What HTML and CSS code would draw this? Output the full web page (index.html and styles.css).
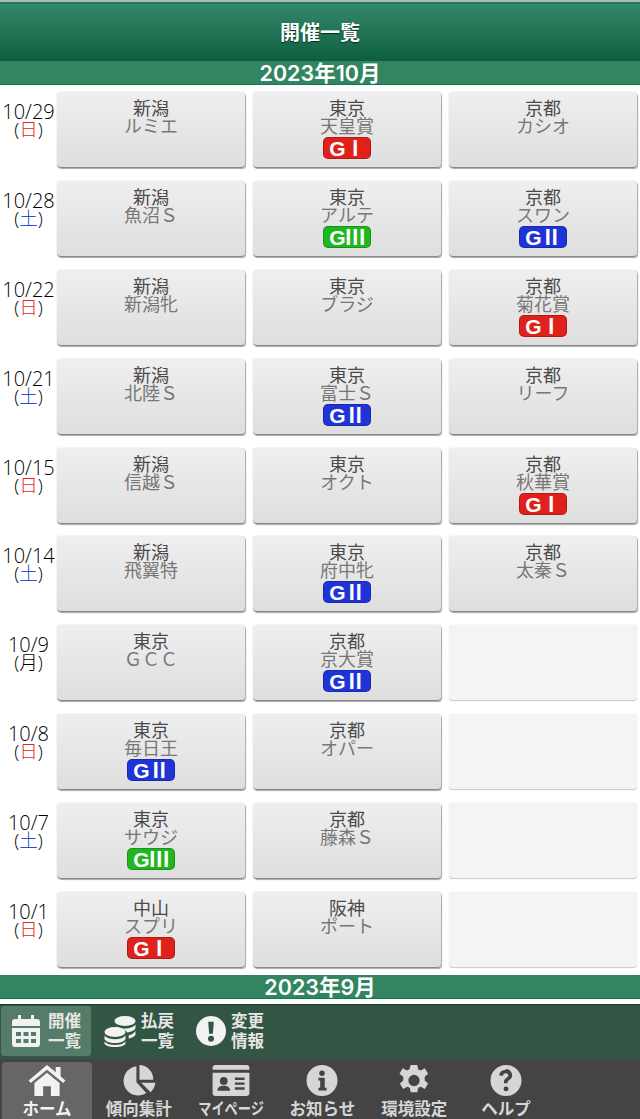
FILE: index.html
```html
<!DOCTYPE html>
<html lang="ja">
<head>
  <meta charset="utf-8">
  <title>開催一覧</title>
  <link rel="stylesheet" href="styles.css">
</head>
<body>
  <svg class="sprite" width="0" height="0" aria-hidden="true">
    <symbol id="i-calendar" viewBox="0 0 28 32">
      <path d="M6 0h3v4h10V0h3v4h3a3 3 0 0 1 3 3v4H0V7a3 3 0 0 1 3-3h3zM0 13h28v16a3 3 0 0 1-3 3H3a3 3 0 0 1-3-3zm4 4v4h5v-4zm7.5 0v4h5v-4zm7.5 0v4h5v-4zM4 24v4h5v-4zm7.5 0v4h5v-4zm7.5 0v4h5v-4z" fill-rule="evenodd"/>
    </symbol>
    <symbol id="i-coins" viewBox="0 0 32 32">
      <ellipse cx="21" cy="6" rx="10.5" ry="5"/>
      <path d="M31.5 9.5v3c0 2.4-3.6 4.4-8.3 4.9-1.2-2-3.700-3.400-6.700-4.100C13.800 12.800 12.500 12 11.500 11c2 1.700 5.500 2.600 9.500 2.600s8.500-1.500 10.500-4.100zM31.500 16v3c0 2-2.800 3.800-6.800 4.500v-3.300c2.800-.5 5.300-2 6.800-4.200z"/>
      <ellipse cx="11" cy="17" rx="10.500" ry="5"/>
      <path d="M.5 20.500C2.500 23 6.500 24.300 11 24.300s8.500-1.300 10.500-3.800v3c0 2.700-4.700 4.500-10.500 4.500S.5 26.200.5 23.500zM.5 26.500C2.500 29 6.500 30 11 30s8.500-1 10.500-3.500V28c0 2.500-4.700 4-10.500 4S.5 30.500.5 28z"/>
    </symbol>
    <symbol id="i-alert" viewBox="0 0 32 32">
      <path d="M16 0a16 16 0 1 1 0 32 16 16 0 0 1 0-32zm-3 6l1 13h4l1-13zm3 15a3.200 3.200 0 1 0 0 6.400 3.200 3.200 0 0 0 0-6.400z" fill-rule="evenodd"/>
    </symbol>
    <symbol id="i-home" viewBox="0 0 38 32">
      <path d="M19 0l9 7.500V2h5v9.700l5 4.300-2.200 2.700L19 5 2.200 18.700 0 16z"/>
      <path d="M19 8l13 10.500V32H23V22h-8v10H6V18.500z"/>
    </symbol>
    <symbol id="i-pie" viewBox="0 0 38 36">
      <path d="M16 1.500v18.500l11.500 12.500A17 17 0 1 1 16 1.500z"/>
      <path d="M19.500 0a16.500 16.500 0 0 1 16 17H19.500z"/>
      <path d="M21.500 20.500H38c-.4 4-2.200 7.500-5.500 11z"/>
    </symbol>
    <symbol id="i-card" viewBox="0 0 38 32">
      <path d="M3 0h32a3 3 0 0 1 3 3v2H0V3a3 3 0 0 1 3-3z"/>
      <path d="M0 8h38v21a3 3 0 0 1-3 3H3a3 3 0 0 1-3-3zm11.500 4.500a4 4 0 1 0 0 8 4 4 0 0 0 0-8zM5 26.500h13c0-3.500-2.500-5-6.500-5s-6.500 1.500-6.500 5zM23 13v2.500h10V13zm0 5v2.500h10V18zm0 5v2.500h10V23z" fill-rule="evenodd"/>
    </symbol>
    <symbol id="i-info" viewBox="0 0 34 34">
      <path d="M17 0a17 17 0 1 1 0 34 17 17 0 0 1 0-34zm0 6a3 3 0 1 0 0 6 3 3 0 0 0 0-6zm-4 8v3h2v8h-2v3h9v-3h-2V14z" fill-rule="evenodd"/>
    </symbol>
    <symbol id="i-gear" viewBox="0 0 32 33">
      <path d="M12.500 0h7l1 4.700 2.800 1.200 4.200-2.500 3.500 6-3.600 3.200v3.800l3.600 3.200-3.500 6-4.200-2.500-2.800 1.200-1 4.700h-7l-1-4.700-2.800-1.200-4.200 2.500-3.500-6 3.600-3.200v-3.800L.5 9.400l3.500-6 4.200 2.500 2.800-1.200zM16 10.500a6 6 0 1 0 0 12 6 6 0 0 0 0-12z" fill-rule="evenodd"/>
    </symbol>
    <symbol id="i-help" viewBox="0 0 34 34">
      <path d="M17 0a17 17 0 1 1 0 34 17 17 0 0 1 0-34zm-.2 5.500c-4 0-6.800 2-7.300 5.800l4 .7c.3-2 1.400-3 3.200-3 1.700 0 2.800.9 2.800 2.300 0 1.200-.7 1.900-2 2.800-2 1.400-2.800 2.700-2.800 4.900v1h4v-.7c0-1.200.4-1.800 1.900-2.800 2-1.400 3.100-3 3.100-5.300 0-3.800-2.900-6.700-6.900-6.700zM17 23.500a2.700 2.700 0 1 0 0 5.400 2.700 2.700 0 0 0 0-5.400z" fill-rule="evenodd"/>
    </symbol>
  </svg>

  <div class="app">
    <div class="header"><h1>開催一覧</h1></div>

    <div class="month">2023年10月</div>
    <div class="schedule">
      <div class="date">10/29<span>(<em class="sun">日</em>)</span></div>
      <a class="race"><b>新潟</b>ルミエ</a>
      <a class="race"><b>東京</b>天皇賞<i class="grade g1">GⅠ</i></a>
      <a class="race"><b>京都</b>カシオ</a>

      <div class="date">10/28<span>(<em class="sat">土</em>)</span></div>
      <a class="race"><b>新潟</b>魚沼Ｓ</a>
      <a class="race"><b>東京</b>アルテ<i class="grade g3">GⅢ</i></a>
      <a class="race"><b>京都</b>スワン<i class="grade g2">GⅡ</i></a>

      <div class="date">10/22<span>(<em class="sun">日</em>)</span></div>
      <a class="race"><b>新潟</b>新潟牝</a>
      <a class="race"><b>東京</b>ブラジ</a>
      <a class="race"><b>京都</b>菊花賞<i class="grade g1">GⅠ</i></a>

      <div class="date">10/21<span>(<em class="sat">土</em>)</span></div>
      <a class="race"><b>新潟</b>北陸Ｓ</a>
      <a class="race"><b>東京</b>富士Ｓ<i class="grade g2">GⅡ</i></a>
      <a class="race"><b>京都</b>リーフ</a>

      <div class="date">10/15<span>(<em class="sun">日</em>)</span></div>
      <a class="race"><b>新潟</b>信越Ｓ</a>
      <a class="race"><b>東京</b>オクト</a>
      <a class="race"><b>京都</b>秋華賞<i class="grade g1">GⅠ</i></a>

      <div class="date">10/14<span>(<em class="sat">土</em>)</span></div>
      <a class="race"><b>新潟</b>飛翼特</a>
      <a class="race"><b>東京</b>府中牝<i class="grade g2">GⅡ</i></a>
      <a class="race"><b>京都</b>太秦Ｓ</a>

      <div class="date">10/9<span>(月)</span></div>
      <a class="race"><b>東京</b>ＧＣＣ</a>
      <a class="race"><b>京都</b>京大賞<i class="grade g2">GⅡ</i></a>
      <a class="race empty"></a>

      <div class="date">10/8<span>(<em class="sun">日</em>)</span></div>
      <a class="race"><b>東京</b>毎日王<i class="grade g2">GⅡ</i></a>
      <a class="race"><b>京都</b>オパー</a>
      <a class="race empty"></a>

      <div class="date">10/7<span>(<em class="sat">土</em>)</span></div>
      <a class="race"><b>東京</b>サウジ<i class="grade g3">GⅢ</i></a>
      <a class="race"><b>京都</b>藤森Ｓ</a>
      <a class="race empty"></a>

      <div class="date">10/1<span>(<em class="sun">日</em>)</span></div>
      <a class="race"><b>中山</b>スプリ<i class="grade g1">GⅠ</i></a>
      <a class="race"><b>阪神</b>ポート</a>
      <a class="race empty"></a>
    </div>
    <div class="month">2023年9月</div>
  </div>

  <div class="footer">
    <div class="subnav">
      <a class="subitem active"><svg class="cal"><use href="#i-calendar"/></svg><span>開催<br>一覧</span></a>
      <a class="subitem"><svg class="coin"><use href="#i-coins"/></svg><span>払戻<br>一覧</span></a>
      <a class="subitem"><svg class="alert"><use href="#i-alert"/></svg><span>変更<br>情報</span></a>
    </div>
    <div class="tabs">
      <a class="tab active"><svg><use href="#i-home"/></svg>ホーム</a>
      <a class="tab"><svg><use href="#i-pie"/></svg>傾向集計</a>
      <a class="tab"><svg><use href="#i-card"/></svg><span class="squeeze">マイページ</span></a>
      <a class="tab"><svg><use href="#i-info"/></svg>お知らせ</a>
      <a class="tab"><svg><use href="#i-gear"/></svg>環境設定</a>
      <a class="tab"><svg><use href="#i-help"/></svg>ヘルプ</a>
    </div>
  </div>
</body>
</html>
```

FILE: styles.css
```css
* {
  margin: 0;
  padding: 0;
  box-sizing: border-box;
}

html, body {
  height: 1119px;
  overflow: hidden;
}

body {
  display: flex;
  flex-direction: column;
  background: #ffffff;
  font-family: "Liberation Sans", "Noto Sans CJK JP", sans-serif;
  color: #333333;
}

.sprite {
  position: absolute;
}

.app {
  flex: 1;
  border-top: 2px solid #b8b8b8;
}

.header {
  height: 59px;
  padding-bottom: 3px;
  display: flex;
  align-items: center;
  justify-content: center;
  background: linear-gradient(#36876a, #0c5f3e);
  border-top: 2px solid #0f8058;
}

.header h1 {
  font-size: 20px;
  font-weight: bold;
  color: #ffffff;
  text-shadow: 0 1px 1px #00301c;
}

.month {
  height: 24px;
  line-height: 25px;
  text-align: center;
  font-family: Inter, "Noto Sans CJK JP", sans-serif;
  font-size: 21.500px;
  font-weight: 600;
  color: #ffffff;
  background: #328560;
  border-bottom: 1px solid #0f7a52;
}

.schedule {
  display: grid;
  grid-template-columns: 49px 188px 188px 188px;
  grid-auto-rows: 76px;
  column-gap: 8px;
  row-gap: 12.89px;
  padding: 7px 0;
  height: 890px;
}

.date {
  margin-right: -8px;
  padding-top: 10px;
  font-family: "Open Sans", "Noto Sans CJK JP", sans-serif;
  font-size: 20px;
  font-weight: 300;
  line-height: 20px;
  text-align: center;
  color: #000000;
  white-space: nowrap;
}

.date span {
  display: block;
  font-size: 18.500px;
  line-height: 14px;
}

.date em {
  font-style: normal;
}

.sun {
  color: #e8261c;
}

.sat {
  color: #2a4fd0;
}

.race {
  display: flex;
  flex-direction: column;
  align-items: center;
  padding-top: 8px;
  font-size: 18px;
  line-height: 18px;
  color: #777777;
  background: linear-gradient(#efefef, #dedede);
  border-radius: 4px;
  border-bottom: 1px solid #888888;
  box-shadow: 0 0 1px #999999, 1px 1px 1px #aaaaaa;
}

.race b {
  font-weight: normal;
  color: #4a4a4a;
}

.race.empty {
  background: #f4f4f4;
  box-shadow: 0 0 1px #c4c4c4;
  border-bottom-color: #cccccc;
}

.grade {
  display: block;
  width: 48px;
  height: 22px;
  margin-top: 1px;
  border-radius: 5px;
  font-style: normal;
  font-weight: bold;
  font-size: 21px;
  line-height: 21px;
  letter-spacing: -1px;
  text-align: center;
  color: #ffffff;
  border: 1px solid rgba(0, 0, 0, 0.2);
}

.g1 {
  background: #e0201a;
}

.g2 {
  background: #1f34d6;
}

.g3 {
  background: #1fb71f;
}

.footer {
  flex: none;
  border-top: 1px solid #1d3a2c;
}

.subnav {
  display: flex;
  height: 54px;
  padding: 1px 0 3px 1px;
  gap: 2px;
  background: #335543;
}

.subitem {
  display: flex;
  align-items: center;
  gap: 5px;
  width: 90px;
  padding-left: 11px;
  border-radius: 3px;
  color: #e6e6e6;
  font-size: 16.500px;
  font-weight: bold;
  line-height: 20px;
}

.subitem.active {
  gap: 8px;
  background: #557c69;
}

.subitem svg {
  fill: #f2f2f2;
  flex: none;
}

.subitem svg.cal {
  width: 28px;
  height: 32px;
}

.subitem svg.coin {
  width: 32px;
  height: 32px;
}

.subitem svg.alert {
  width: 30px;
  height: 30px;
}

.tabs {
  display: flex;
  height: 60px;
  padding: 3px 0 0 2px;
  background: #444444;
  overflow: hidden;
}

.tab {
  display: flex;
  flex-direction: column;
  align-items: center;
  width: 90px;
  margin-right: 1.800px;
  padding-top: 3px;
  border-radius: 4px 4px 0 0;
  color: #d6d6d6;
  font-size: 16.500px;
  font-weight: bold;
  line-height: 20px;
  white-space: nowrap;
}

.tab.active {
  background: #666666;
  color: #f2f2f2;
}

.tab svg {
  width: 38px;
  height: 34px;
  margin-bottom: 3px;
  fill: #d6d6d6;
}

.tab.active svg {
  fill: #f2f2f2;
}

.squeeze {
  transform: scaleX(0.8);
}
```
